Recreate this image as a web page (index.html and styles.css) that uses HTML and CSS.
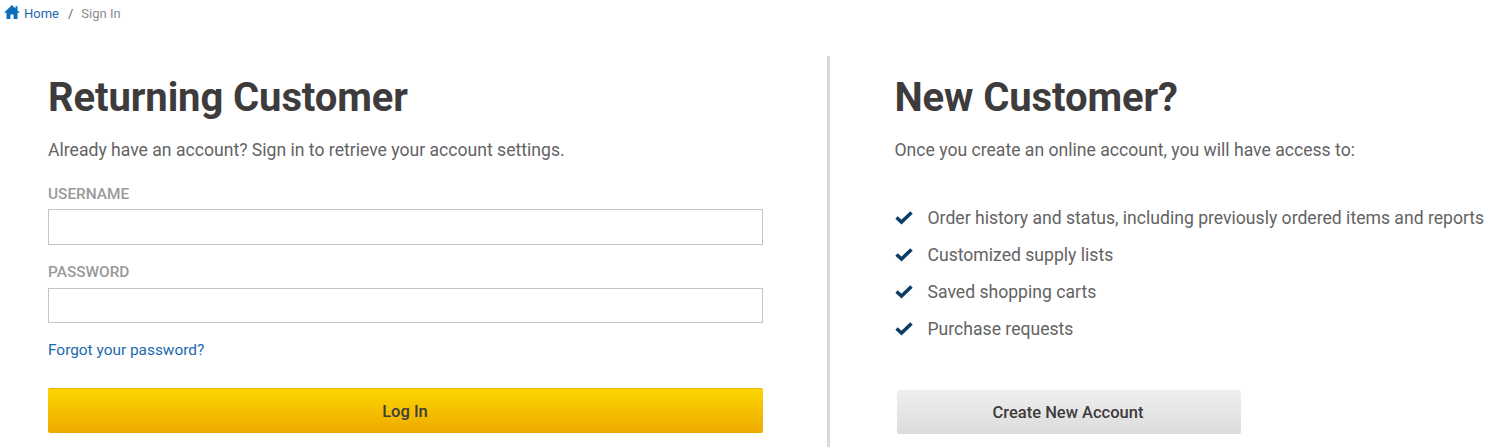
FILE: index.html
```html
<!DOCTYPE html>
<html lang="en">
<head>
<meta charset="utf-8">
<title>Sign In</title>
<link rel="stylesheet" href="styles.css">
</head>
<body>
<nav class="crumbs">
  <svg class="home-icon" viewBox="0 0 16 14" width="16" height="14"><path d="M8 0 0 7.800h2.500V14h3.900V9.500h3.200V14h3.900V7.800H16l-2.500-2.400V1.200h-2v2.300z"/></svg>
  <a class="crumb-link" href="#">Home</a>
  <span class="crumb-sep">/</span>
  <span class="crumb-current">Sign In</span>
</nav>
<main class="columns">
  <section class="col-left">
    <h1 class="title">Returning Customer</h1>
    <p class="lead">Already have an account? Sign in to retrieve your account settings.</p>
    <label class="field-label">USERNAME</label>
    <input class="field" type="text">
    <label class="field-label second">PASSWORD</label>
    <input class="field field-short" type="password">
    <a class="forgot" href="#">Forgot your password?</a>
    <button class="btn-login" type="button">Log In</button>
  </section>
  <section class="col-right">
    <h1 class="title">New Customer?</h1>
    <p class="lead">Once you create an online account, you will have access to:</p>
    <ul class="benefits">
      <li><svg class="check" viewBox="0 0 18 14" width="18" height="14"><path d="M1.500 6.500 6.500 11 16.500 1.500"/></svg>Order history and status, including previously ordered items and reports</li>
      <li><svg class="check" viewBox="0 0 18 14" width="18" height="14"><path d="M1.500 6.500 6.500 11 16.500 1.500"/></svg>Customized supply lists</li>
      <li><svg class="check" viewBox="0 0 18 14" width="18" height="14"><path d="M1.500 6.500 6.500 11 16.500 1.500"/></svg>Saved shopping carts</li>
      <li><svg class="check" viewBox="0 0 18 14" width="18" height="14"><path d="M1.500 6.500 6.500 11 16.500 1.500"/></svg>Purchase requests</li>
    </ul>
    <button class="btn-create" type="button">Create New Account</button>
  </section>
</main>
</body>
</html>
```
FILE: styles.css
```css
* { box-sizing: border-box; }
html, body { margin: 0; height: 447px; overflow: hidden; background: #fff; }
body { font-family: Roboto, sans-serif; color: #636363; }
.crumbs { display: flex; align-items: center; height: 26px; padding-left: 4px; font-size: 13px; }
.home-icon { fill: #0a6ebd; margin: 0 4px 3px 0; }
.crumb-link { color: #1a69ad; text-decoration: none; }
.crumb-sep { margin: 0 8px 0 9px; color: #666; }
.crumb-current { color: #8c8c8c; }
.columns { display: flex; margin-top: 30px; height: 391px; }
.col-left { width: 830px; padding-left: 48px; border-right: 3px solid #d9d9d9; }
.col-right { flex: 1; padding-left: 64.500px; white-space: nowrap; }
.title { margin: 17px 0 0; font-size: 40px; line-height: 50px; font-weight: 700; color: #3d3b3b; letter-spacing: -0.1px; }
.lead { margin: 15px 0 0; font-size: 17.600px; line-height: 24px; }
.field-label { display: block; margin-top: 23px; font-size: 15.400px; line-height: 18px; font-weight: 500; color: #9a9a9a; }
.field-label.second { margin-top: 18px; }
.field { display: block; width: 715px; height: 36px; margin-top: 6px; border: 1px solid #c4c4c4; background: #fff; }
.field-short { height: 35px; margin-top: 7px; }
.forgot { display: block; margin-top: 18px; font-size: 15.400px; line-height: 18px; color: #1a69ad; text-decoration: none; }
.btn-login { display: block; width: 715px; height: 45px; margin-top: 29px; padding: 0 7px 0 6px; border: 0; border-top: 1px solid #eeb000; border-radius: 2px; background: linear-gradient(#fbd500, #efaa00); font: 500 16.500px Roboto, sans-serif; color: #3d3b3b; }
.benefits { list-style: none; margin: 37px 0 0; padding: 0; }
.benefits li { display: flex; align-items: center; height: 37px; font-size: 17.600px; }
.check { fill: none; stroke: #0b3d66; stroke-width: 3.500; margin-right: 15px; }
.btn-create { display: block; width: 344px; height: 44px; margin: 43px 0 0 2.500px; padding: 0 8px 0 6px; border: 0; border-radius: 2px; background: linear-gradient(#efefef, #dcdcdc); font: 500 16.500px Roboto, sans-serif; color: #3d3b3b; }
```
